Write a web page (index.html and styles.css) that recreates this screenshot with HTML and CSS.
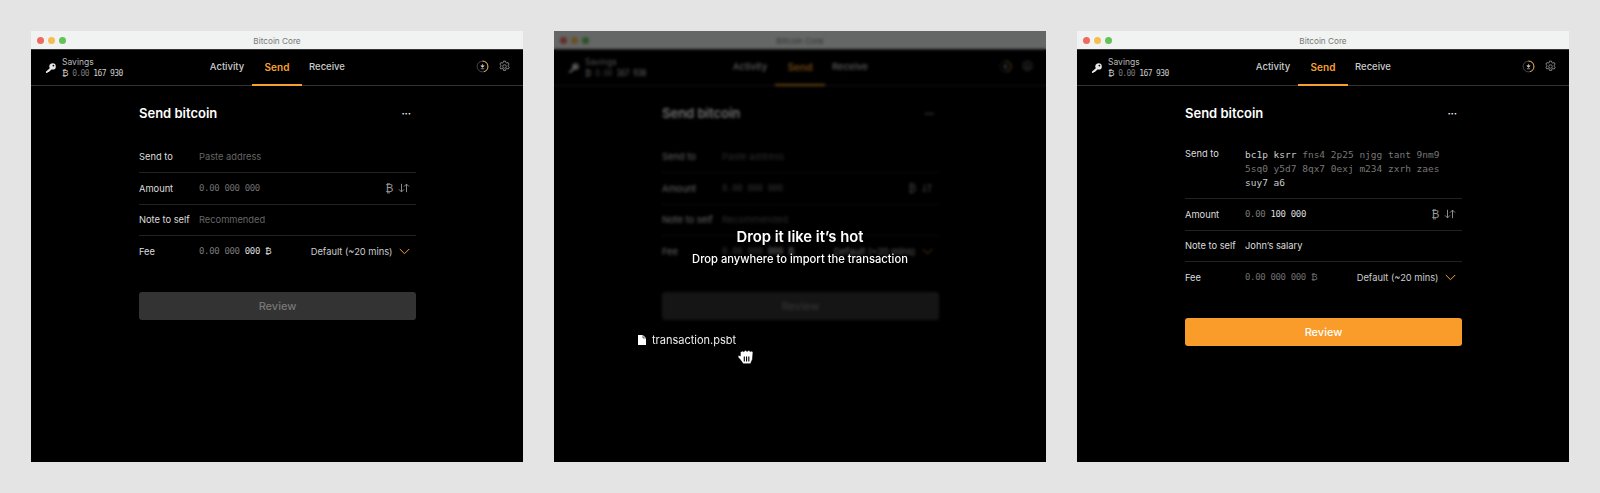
FILE: index.html
```html
<html>
<head>
    <meta charset="utf-8">
    <link rel="stylesheet" href="styles.css">
</head>
<body>
    <svg class="defs" width="0" height="0">
        <symbol id="key" viewBox="0 0 12 12">
            <path d="M7.6 1.2a3.2 3.2 0 0 1 0 6.4c-.4 0-.8-.1-1.1-.2L3.8 10.1H2.6v1H1.2L.8 9.8l4-3.600a3.200 3.200 0 0 1 2.800-5zm.8 1.500a.9.9 0 1 0 0 1.800.9.9 0 0 0 0-1.800z" fill="#e8e8e8" fill-rule="evenodd"/>
        </symbol>
        <symbol id="sync" viewBox="0 0 14 14">
            <circle cx="7" cy="7" r="5.800" fill="none" stroke="#555" stroke-width=".9"/>
            <path d="M7 1.200a5.800 5.800 0 0 1 1.500 11.400" fill="none" stroke="#e9b044" stroke-width="1"/>
            <path d="M7 4.200v2M5.200 6.200h3.600L7 8zM5.200 9.400h3.600" fill="#ccc" stroke="#ccc" stroke-width=".7"/>
        </symbol>
        <symbol id="gear" viewBox="0 0 14 14">
            <path d="M5.900 1.200h2.200l.3 1.600 1 .5 1.500-.6 1.100 1.900-1.200 1 .1 1.200 1.200 1-1.100 1.900-1.500-.6-1 .6-.3 1.500H5.900l-.3-1.500-1-.6-1.500.6-1.100-1.900 1.200-1 0-1.200-1.200-1 1.100-1.900 1.500.6 1-.5z" fill="none" stroke="#aaa" stroke-width=".8" stroke-linejoin="round"/>
            <circle cx="7" cy="7" r="1.900" fill="none" stroke="#aaa" stroke-width=".8"/>
        </symbol>
        <symbol id="swap" viewBox="0 0 12 10">
            <path d="M3.500.8v8M1 6.400l2.500 2.500L6 6.400M8.500 9.200v-8M6 3.600l2.500-2.500L11 3.600" fill="none" stroke="#9a9a9a" stroke-width=".9"/>
        </symbol>
        <symbol id="chevron" viewBox="0 0 11 7">
            <path d="M.8 1l4.700 4.700L10.200 1" fill="none" stroke="#f7a031" stroke-width="1"/>
        </symbol>
    </svg>

    <div class="page">
        <!-- empty form -->
        <div class="window">
            <div class="titlebar">
                <div class="lights"><i class="red"></i><i class="yellow"></i><i class="green"></i></div>
                <span>Bitcoin Core</span>
            </div>
            <div class="app">
                <div class="header">
                    <div class="wallet">
                        <svg class="key"><use href="#key"/></svg>
                        <div>
                            <div class="wallet-name">Savings</div>
                            <div class="wallet-sum"><span class="btc">₿</span> <span class="dim">0.00</span> 167 930</div>
                        </div>
                    </div>
                    <div class="tabs">
                        <div class="tab">Activity</div>
                        <div class="tab active">Send</div>
                        <div class="tab">Receive</div>
                    </div>
                    <div class="tools">
                        <svg class="tool"><use href="#sync"/></svg>
                        <svg class="tool"><use href="#gear"/></svg>
                    </div>
                </div>
                <div class="form">
                    <div class="form-head"><h1>Send bitcoin</h1><span class="more">•••</span></div>
                    <div class="row"><label>Send to</label><span class="hint">Paste address</span></div>
                    <div class="row">
                        <label>Amount</label><span class="mono dim">0.00 000 000</span>
                        <span class="unit"><span class="btc">₿</span><svg class="swap"><use href="#swap"/></svg></span>
                    </div>
                    <div class="row"><label>Note to self</label><span class="hint">Recommended</span></div>
                    <div class="row last">
                        <label>Fee</label><span class="mono"><span class="dim">0.00 000</span> 000 <span class="btc">₿</span></span>
                        <span class="speed">Default (~20 mins)<svg class="chevron"><use href="#chevron"/></svg></span>
                    </div>
                    <button class="review">Review</button>
                </div>
            </div>
        </div>

        <!-- dragging a file over the window -->
        <div class="window">
            <div class="titlebar">
                <div class="lights"><i class="red"></i><i class="yellow"></i><i class="green"></i></div>
                <span>Bitcoin Core</span>
            </div>
            <div class="app">
                <div class="header">
                    <div class="wallet">
                        <svg class="key"><use href="#key"/></svg>
                        <div>
                            <div class="wallet-name">Savings</div>
                            <div class="wallet-sum"><span class="btc">₿</span> <span class="dim">0.00</span> 167 930</div>
                        </div>
                    </div>
                    <div class="tabs">
                        <div class="tab">Activity</div>
                        <div class="tab active">Send</div>
                        <div class="tab">Receive</div>
                    </div>
                    <div class="tools">
                        <svg class="tool"><use href="#sync"/></svg>
                        <svg class="tool"><use href="#gear"/></svg>
                    </div>
                </div>
                <div class="form">
                    <div class="form-head"><h1>Send bitcoin</h1><span class="more">•••</span></div>
                    <div class="row"><label>Send to</label><span class="hint">Paste address</span></div>
                    <div class="row">
                        <label>Amount</label><span class="mono dim">0.00 000 000</span>
                        <span class="unit"><span class="btc">₿</span><svg class="swap"><use href="#swap"/></svg></span>
                    </div>
                    <div class="row"><label>Note to self</label><span class="hint">Recommended</span></div>
                    <div class="row last">
                        <label>Fee</label><span class="mono"><span class="dim">0.00 000</span> 000 <span class="btc">₿</span></span>
                        <span class="speed">Default (~20 mins)<svg class="chevron"><use href="#chevron"/></svg></span>
                    </div>
                    <button class="review">Review</button>
                </div>
            </div>
            <div class="shade">
                <div class="drop-title">Drop it like it’s hot</div>
                <div class="drop-sub">Drop anywhere to import the transaction</div>
            </div>
            <div class="drag-file">
                <svg class="file" viewBox="0 0 8 10"><path d="M0 0h5l3 3v7H0z" fill="#fff"/><path d="M5 0v3h3" fill="none" stroke="#000" stroke-width=".6"/></svg>
                transaction.psbt
            </div>
            <svg class="hand" viewBox="0 0 16 16">
                <path d="M3 3.500l2-.8 1 .6 1.500-1.300 1.500 1 1.500-.9 1.200 1.100 1.500-.5 1 1.300-.5 6-1.700 4H5.500L3 10.500.8 8l.7-1.500L3 7z" fill="#fff" stroke="#000" stroke-width=".5"/>
                <path d="M6.500 7.500v4.500M8.500 7.500v4.500M10.500 7.500v4.500" stroke="#000" stroke-width="1"/>
            </svg>
        </div>

        <!-- filled in -->
        <div class="window">
            <div class="titlebar">
                <div class="lights"><i class="red"></i><i class="yellow"></i><i class="green"></i></div>
                <span>Bitcoin Core</span>
            </div>
            <div class="app">
                <div class="header">
                    <div class="wallet">
                        <svg class="key"><use href="#key"/></svg>
                        <div>
                            <div class="wallet-name">Savings</div>
                            <div class="wallet-sum"><span class="btc">₿</span> <span class="dim">0.00</span> 167 930</div>
                        </div>
                    </div>
                    <div class="tabs">
                        <div class="tab">Activity</div>
                        <div class="tab active">Send</div>
                        <div class="tab">Receive</div>
                    </div>
                    <div class="tools">
                        <svg class="tool"><use href="#sync"/></svg>
                        <svg class="tool"><use href="#gear"/></svg>
                    </div>
                </div>
                <div class="form">
                    <div class="form-head"><h1>Send bitcoin</h1><span class="more">•••</span></div>
                    <div class="row tall">
                        <label>Send to</label>
                        <span class="address">bc1p ksrr <span class="dim">fns4 2p25 njgg tant 9nm9<br>5sq0 y5d7 8qx7 0exj m234 zxrh zaes</span><br>suy7 a6</span>
                    </div>
                    <div class="row">
                        <label>Amount</label><span class="mono"><span class="dim">0.00</span> 100 000</span>
                        <span class="unit"><span class="btc">₿</span><svg class="swap"><use href="#swap"/></svg></span>
                    </div>
                    <div class="row"><label>Note to self</label><span class="note">John’s salary</span></div>
                    <div class="row last">
                        <label>Fee</label><span class="mono dim">0.00 000 000 <span class="btc">₿</span></span>
                        <span class="speed">Default (~20 mins)<svg class="chevron"><use href="#chevron"/></svg></span>
                    </div>
                    <button class="review ready">Review</button>
                </div>
            </div>
        </div>
    </div>
</body>
</html>
```

FILE: styles.css
```css
body { margin: 0; background: #e4e4e4; font-family: Inter, "Noto Sans", sans-serif; color: #e8e8e8; }
.defs { display: block; height: 0; }
.page { display: flex; gap: 31px; padding: 31px; height: 431px; }

.window { position: relative; flex: 0 0 492px; height: 431px; background: #000; overflow: hidden; }

.titlebar { position: relative; display: flex; align-items: center; justify-content: center; height: 17px; padding-top: 1px; background: #f1f3f2; border-bottom: 1px solid #333; font-size: 8.2px; color: #777; margin-bottom: -1px; }
.lights { position: absolute; left: 6px; top: 5.5px; display: flex; gap: 4px; }
.lights i { width: 7px; height: 7px; border-radius: 50%; }
.red { background: #ee6a5f; }
.yellow { background: #f5bd4f; }
.green { background: #61c454; }

.header { display: grid; grid-template-columns: 1fr 150px 1fr; height: 36px; border-bottom: 1px solid #333; }
.wallet { display: flex; align-items: center; gap: 5px; padding-left: 14px; padding-top: 1px; }
.key { width: 12px; height: 12px; }
.wallet-name { font-size: 8.5px; line-height: 11px; color: #bbb; }
.wallet-sum { font-family: "DejaVu Sans Mono", monospace; font-size: 8px; letter-spacing: -.6px; line-height: 11px; color: #ccc; }
.dim { color: #777; }
.btc { font-family: "DejaVu Sans", sans-serif; font-size: 1.1em; }

.tabs { display: flex; }
.tab { flex: 1; display: flex; align-items: center; justify-content: center; padding-bottom: 1px; font-size: 9.5px; font-weight: 500; color: #ccc; }
.tab.active { color: #f7a031; font-weight: 600; font-size: 10px; box-shadow: inset 0 -2px 0 #f7a031; margin-bottom: -1px; }
.tools { display: flex; align-items: center; justify-content: flex-end; gap: 9px; padding-right: 12px; padding-bottom: 1px; }
.tool { width: 13px; height: 13px; }

.form { margin: 0 107px 0 108px; }
.form-head { display: flex; align-items: center; justify-content: space-between; height: 54px; margin-bottom: 1.5px; padding-right: 5px; }
h1 { margin: 0; font-size: 13px; font-weight: 600; color: #fff; }
.more { font-size: 5px; letter-spacing: .3px; color: #fff; }

.row { display: flex; align-items: center; height: 30.5px; border-bottom: 1px solid #222; font-size: 9.3px; padding-right: 6.5px; }
.row label { flex: 0 0 60px; color: #ddd; white-space: nowrap; }
.row.tall { align-items: flex-start; height: 57.5px; padding-top: 6.4px; box-sizing: border-box; }
.row.last { border-bottom: 0; }
.hint { color: #666; }
.note { color: #ddd; }
.mono { font-family: "DejaVu Sans Mono", monospace; font-size: 9px; letter-spacing: -.34px; color: #ddd; }
.mono.dim { color: #6e6e6e; }
.mono .btc { font-size: 1em; }
.address { font-family: "DejaVu Sans Mono", monospace; font-size: 9.5px; line-height: 14.3px; color: #ccc; }
.unit { margin-left: auto; display: flex; align-items: center; gap: 4px; color: #999; }
.unit .btc { font-size: 11px; }
.swap { width: 12px; height: 10px; }
.speed { margin-left: auto; display: flex; align-items: center; gap: 6px; color: #ccc; }
.chevron { width: 11px; height: 7px; }

.review { display: block; width: 100%; height: 28px; margin-top: 25.5px; border: 0; border-radius: 3px; background: #333; color: #777; font: 500 11px Inter, sans-serif; }
.review.ready { background: #f99c2a; color: #fff; }

.shade { position: absolute; inset: 0; background: rgba(0, 0, 0, .58); backdrop-filter: blur(1.6px); display: flex; flex-direction: column; align-items: center; padding-top: 197px; box-sizing: border-box; color: #fff; }
.drop-title { font-size: 14.8px; font-weight: 600; line-height: 18px; }
.drop-sub { font-size: 11.2px; font-weight: 500; line-height: 14px; margin-top: 6px; }
.drag-file { position: absolute; left: 84px; top: 302px; display: flex; align-items: center; gap: 6px; font-size: 11px; color: #eee; }
.file { width: 8px; height: 10px; }
.hand { position: absolute; left: 183px; top: 317px; width: 18px; height: 18px; }
```
